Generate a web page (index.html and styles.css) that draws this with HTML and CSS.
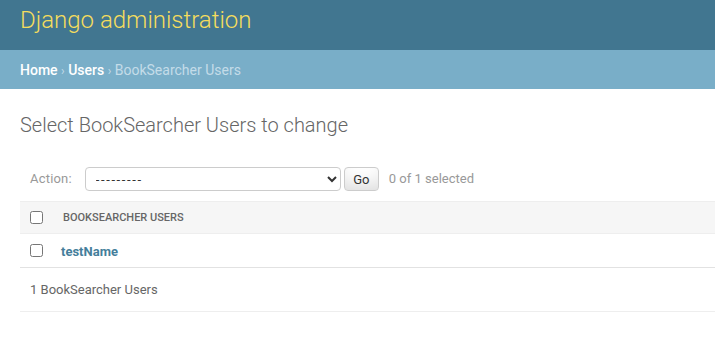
FILE: index.html
```html
<!DOCTYPE html>
<html lang="en">
<head>
    <meta charset="UTF-8">
    <meta name="viewport" content="width=device-width, initial-scale=1.0">
    <title>Select BookSearcher Users to change | Django site admin</title>
    <link rel="stylesheet" href="styles.css">
</head>
<body>

    <div class="header">
        <h1 class="branding"><a href="#">Django administration</a></h1>
    </div>

    <div class="breadcrumbs">
        <a href="#">Home</a> <span class="sep">&rsaquo;</span> <a href="#">Users</a> <span class="sep">&rsaquo;</span> BookSearcher Users
    </div>

    <div class="content">
        <h1 class="page-title">Select BookSearcher Users to change</h1>

        <form class="changelist">
            <div class="actions">
                <label class="action-label">Action:
                    <select class="action-select">
                        <option selected>---------</option>
                        <option>Delete selected BookSearcher Users</option>
                    </select>
                </label>
                <button type="button" class="go-btn">Go</button>
                <span class="action-counter">0 of 1 selected</span>
            </div>

            <table class="result-list">
                <thead>
                    <tr>
                        <th class="check-col"><input type="checkbox"></th>
                        <th><span class="col-text">BookSearcher Users</span></th>
                    </tr>
                </thead>
                <tbody>
                    <tr>
                        <td class="check-col"><input type="checkbox"></td>
                        <th class="field"><a href="#">testName</a></th>
                    </tr>
                </tbody>
            </table>

            <p class="paginator">1 BookSearcher Users</p>
        </form>
    </div>

</body>
</html>
```

FILE: styles.css
```css
body {
    margin: 0;
    font-family: Roboto, 'Liberation Sans', Arial, sans-serif;
    font-size: 14px;
    color: #333;
    background: #fff;
}
a {
    text-decoration: none;
}
.header {
    background: #417690;
    padding: 6px 20px 15px;
}
.branding {
    margin: 0;
    font-size: 24px;
    font-weight: 300;
    line-height: 29px;
}
.branding a {
    color: #f5dd5d;
}
.breadcrumbs {
    background: #79aec8;
    color: #c4dce8;
    padding: 12px 20px 9px;
    font-size: 14px;
    line-height: 17px;
}
.breadcrumbs a {
    color: #fff;
    font-weight: 500;
}
.breadcrumbs .sep {
    font-size: 12px;
}
.content {
    padding: 24px 0 0 20px;
}
.page-title {
    margin: 0 0 20px;
    font-size: 20px;
    font-weight: 300;
    line-height: 24px;
    color: #666;
}
.actions {
    padding: 10px;
    line-height: 24px;
    color: #999;
    font-size: 13px;
    display: flex;
    align-items: center;
}
.action-label {
    display: flex;
    align-items: center;
    letter-spacing: 0.2px;
}
.action-select {
    margin-left: 13px;
    width: 256px;
    height: 24px;
    border: 1px solid #ccc;
    border-radius: 4px;
    background: #fff;
    color: #333;
    font-family: inherit;
    font-size: 13px;
    letter-spacing: 1.6px;
    padding: 0 6px;
}
.go-btn {
    margin-left: 3px;
    width: 35px;
    height: 24px;
    padding: 4px 8px;
    border: 1px solid #ccc;
    border-radius: 4px;
    background: #fff;
    box-shadow: 0 -15px 20px -10px rgba(0, 0, 0, 0.15) inset;
    font-family: inherit;
    font-size: 13px;
    line-height: 1;
    color: #333;
    cursor: pointer;
}
.action-counter {
    margin-left: 10px;
}
.result-list {
    width: 100%;
    border-collapse: collapse;
}
.result-list input[type="checkbox"] {
    margin: 0;
    width: 13px;
    height: 13px;
    display: block;
}
.result-list thead th {
    background: #f6f6f6;
    border-top: 1px solid #eee;
    border-bottom: 1px solid #eee;
    height: 31px;
    padding: 0 10px;
    text-align: left;
    font-size: 11px;
    font-weight: 500;
    color: #666;
    text-transform: uppercase;
}
.result-list .col-text {
    padding-left: 2px;
}
.result-list .check-col {
    width: 13px;
    padding: 0 8px 0 10px;
}
.result-list tbody td,
.result-list tbody th {
    height: 33px;
    padding: 0 10px;
    border-bottom: 1px solid #e2e2e2;
    text-align: left;
    vertical-align: middle;
}
.result-list tbody td.check-col {
    padding: 0 8px 0 10px;
}
.field a {
    color: #447e9b;
    font-size: 13px;
    font-weight: 700;
}
.paginator {
    margin: 0;
    padding: 11px 10px 10px;
    font-size: 13px;
    line-height: 22px;
    color: #666;
    border-bottom: 1px solid #eee;
}
```
